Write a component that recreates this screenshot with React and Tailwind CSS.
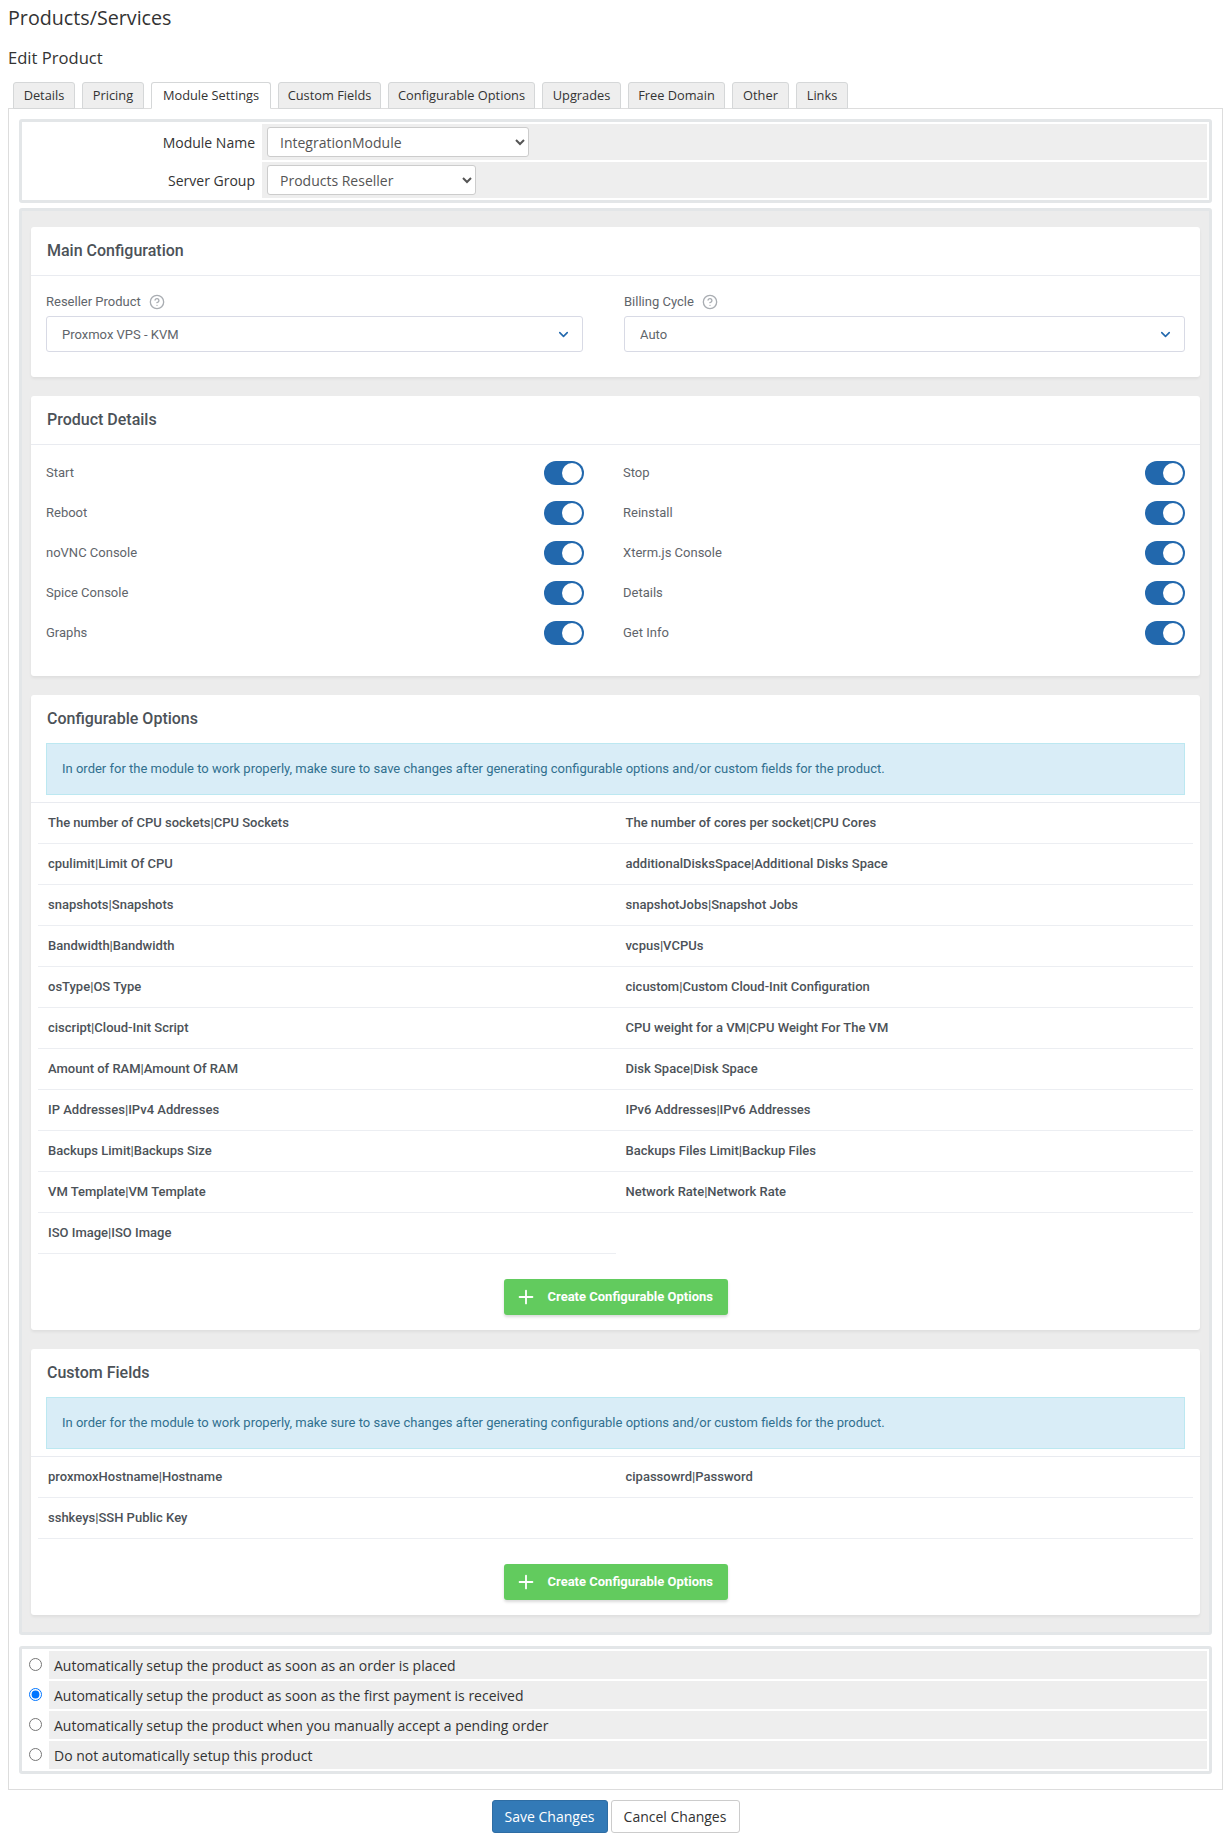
import React from "react";
import { ChevronDown, CircleHelp, Plus } from "lucide-react";

const openSans = "font-['Open_Sans',sans-serif]";
const roboto = "font-['Roboto',sans-serif]";

const tabs = [
  ["Details", "w-[62px]"],
  ["Pricing", "w-[62px]"],
  ["Module Settings", "w-[120px]"],
  ["Custom Fields", "w-[103px]"],
  ["Configurable Options", "w-[147px]"],
  ["Upgrades", "w-[79px]"],
  ["Free Domain", "w-[97px]"],
  ["Other", "w-[57px]"],
  ["Links", "w-[52px]"],
];

const toggles = [
  ["Start", "Stop"],
  ["Reboot", "Reinstall"],
  ["noVNC Console", "Xterm.js Console"],
  ["Spice Console", "Details"],
  ["Graphs", "Get Info"],
];

const options = [
  "The number of CPU sockets|CPU Sockets",
  "The number of cores per socket|CPU Cores",
  "cpulimit|Limit Of CPU",
  "additionalDisksSpace|Additional Disks Space",
  "snapshots|Snapshots",
  "snapshotJobs|Snapshot Jobs",
  "Bandwidth|Bandwidth",
  "vcpus|VCPUs",
  "osType|OS Type",
  "cicustom|Custom Cloud-Init Configuration",
  "ciscript|Cloud-Init Script",
  "CPU weight for a VM|CPU Weight For The VM",
  "Amount of RAM|Amount Of RAM",
  "Disk Space|Disk Space",
  "IP Addresses|IPv4 Addresses",
  "IPv6 Addresses|IPv6 Addresses",
  "Backups Limit|Backups Size",
  "Backups Files Limit|Backup Files",
  "VM Template|VM Template",
  "Network Rate|Network Rate",
  "ISO Image|ISO Image",
];

const fields = [
  "proxmoxHostname|Hostname",
  "cipassowrd|Password",
  "sshkeys|SSH Public Key",
  "",
];

const radios = [
  "Automatically setup the product as soon as an order is placed",
  "Automatically setup the product as soon as the first payment is received",
  "Automatically setup the product when you manually accept a pending order",
  "Do not automatically setup this product",
];

const NOTICE =
  "In order for the module to work properly, make sure to save changes after generating configurable options and/or custom fields for the product.";

function Card({ title, bordered, children }) {
  return (
    <section className="rounded-[3px] bg-white shadow-[0_2px_3px_rgba(0,0,0,0.06)]">
      <h3
        className={`pl-4 text-[16px] font-medium leading-[48px] text-[#4c5258] ${
          bordered ? "h-[49px] border-b border-[#e9ebf0]" : "h-12"
        }`}
      >
        {title}
      </h3>
      {children}
    </section>
  );
}

function FancySelect({ label, value }) {
  return (
    <div>
      <div className="flex h-[16px] items-center text-[13px] text-[#5f656b]">
        {label}
        <CircleHelp size={16} strokeWidth={2} className="ml-[8px] text-[#a9adb2]" />
      </div>
      <div className="relative mt-[6px]">
        <select
          defaultValue={value}
          className="h-9 w-full appearance-none rounded-[3px] border border-[#d8dae5] bg-white pl-[15px] pt-[2px] text-[13px] text-[#5f656b]"
        >
          <option>{value}</option>
        </select>
        <ChevronDown
          size={15}
          strokeWidth={2.5}
          className="pointer-events-none absolute right-[12px] top-[11px] text-[#2268ad]"
        />
      </div>
    </div>
  );
}

function Toggle() {
  return (
    <span className="flex h-6 w-10 items-center justify-end rounded-full bg-[#2268ad] pr-[2px]">
      <span className="h-5 w-5 rounded-full bg-white" />
    </span>
  );
}

function Notice() {
  return (
    <div className="mx-[15px] mb-[7px] flex h-[52px] items-center border border-[#bce8f1] bg-[#d9edf7] pl-[15px] text-[13px] text-[#31708f]">
      {NOTICE}
    </div>
  );
}

function Rows({ items }) {
  return (
    <div className="border-t border-[#e9ebf0] px-[7px]">
      <div className="grid grid-cols-2">
        {items.map((t, i) => (
          <div
            key={i}
            className="flex h-[41px] items-center border-b border-[#eceef2] pl-[10px] text-[13px] font-medium text-[#4c5258]"
          >
            {t}
          </div>
        ))}
      </div>
    </div>
  );
}

function CreateButton() {
  return (
    <div className="flex justify-center pb-[15px] pt-[25px]">
      <button className="flex h-9 w-[224px] items-center rounded-[3px] bg-[#62cb5e] pl-[11px] text-[13px] font-bold text-white shadow-[0_2px_3px_rgba(0,0,0,0.15)]">
        <Plus size={22} strokeWidth={2} />
        <span className="ml-[11px]">Create Configurable Options</span>
      </button>
    </div>
  );
}

export default function App() {
  return (
    <div className={`${openSans} bg-white pb-[10px] pl-2 pr-[9px] text-[#333]`}>
      <h1 className="h-9 text-[19.7px] font-normal leading-[36px]">Products/Services</h1>
      <h2 className="mt-[10px] h-6 text-[16.6px] font-normal leading-[24px]">Edit Product</h2>

      <nav className="relative z-10 mt-3 flex gap-[7px] pl-[5px]">
        {tabs.map(([t, w]) => {
          const active = t === "Module Settings";
          return (
            <div
              key={t}
              className={`flex h-[27px] items-center justify-center rounded-t-[3px] border border-[#d5d7d8] text-[12.8px] ${w} ${
                active ? "border-b-white bg-white" : "bg-[#eeeeee]"
              }`}
            >
              {t}
            </div>
          );
        })}
      </nav>

      <main className="-mt-px border border-[#dddddd] px-[10px] pb-[15px] pt-[10px]">
        <div className="flex flex-col gap-[2px] rounded-[3px] border-[3px] border-[#e3e6e8] p-[2px] text-[14px]">
          {[
            ["Module Name", "IntegrationModule", "w-[262px]"],
            ["Server Group", "Products Reseller", "w-[209px]"],
          ].map(([label, value, w]) => (
            <div key={label} className="flex h-9">
              <label className="flex w-[238px] shrink-0 items-center justify-end pr-[7px]">{label}</label>
              <div className="flex flex-1 items-center bg-[#eeeeee] pl-[5px]">
                <select
                  defaultValue={value}
                  className={`h-[30px] rounded-[3px] border border-[#cccccc] bg-white pl-[8px] text-[14px] text-[#555] ${w}`}
                >
                  <option>{value}</option>
                </select>
              </div>
            </div>
          ))}
        </div>

        <div className={`${roboto} mt-[5px] flex flex-col gap-[19px] rounded-[3px] border-[3px] border-[#e3e6e8] bg-[#ececec] px-[9px] pb-[17px] pt-4`}>
          <Card title="Main Configuration" bordered>
            <div className="grid grid-cols-[537px_1fr] gap-x-[41px] px-[15px] pb-[25px] pt-[18px]">
              <FancySelect label="Reseller Product" value="Proxmox VPS - KVM" />
              <FancySelect label="Billing Cycle" value="Auto" />
            </div>
          </Card>

          <Card title="Product Details" bordered>
            <div className="flex flex-col gap-4 px-[15px] pb-[31px] pt-4">
              {toggles.map((row) => (
                <div key={row[0]} className="grid grid-cols-[538px_1fr] gap-x-[39px]">
                  {row.map((t) => (
                    <div key={t} className="flex h-6 items-center justify-between text-[13px] text-[#5f656b]">
                      {t}
                      <Toggle />
                    </div>
                  ))}
                </div>
              ))}
            </div>
          </Card>

          <Card title="Configurable Options">
            <Notice />
            <Rows items={options} />
            <CreateButton />
          </Card>

          <Card title="Custom Fields">
            <Notice />
            <Rows items={fields} />
            <CreateButton />
          </Card>
        </div>

        <div className="mt-[11px] flex flex-col gap-[2px] rounded-[3px] border-[3px] border-[#e3e6e8] p-[2px] text-[14px]">
          {radios.map((t, i) => (
            <label key={t} className="flex h-7">
              <span className="flex w-[25px] shrink-0 justify-center pr-[2px] pt-[7px]">
                <input type="radio" name="autosetup" defaultChecked={i === 1} className="m-0 h-[13px] w-[13px]" />
              </span>
              <span className="flex flex-1 items-center bg-[#eeeeee] pl-[5px]">{t}</span>
            </label>
          ))}
        </div>
      </main>

      <div className="mt-[10px] flex justify-center gap-[3px] text-[14px]">
        <button className="h-[33px] w-[116px] rounded-[3px] border border-[#2e6da4] bg-[#337ab7] text-white">Save Changes</button>
        <button className="h-[33px] w-[129px] rounded-[3px] border border-[#cccccc] bg-white">Cancel Changes</button>
      </div>
    </div>
  );
}
